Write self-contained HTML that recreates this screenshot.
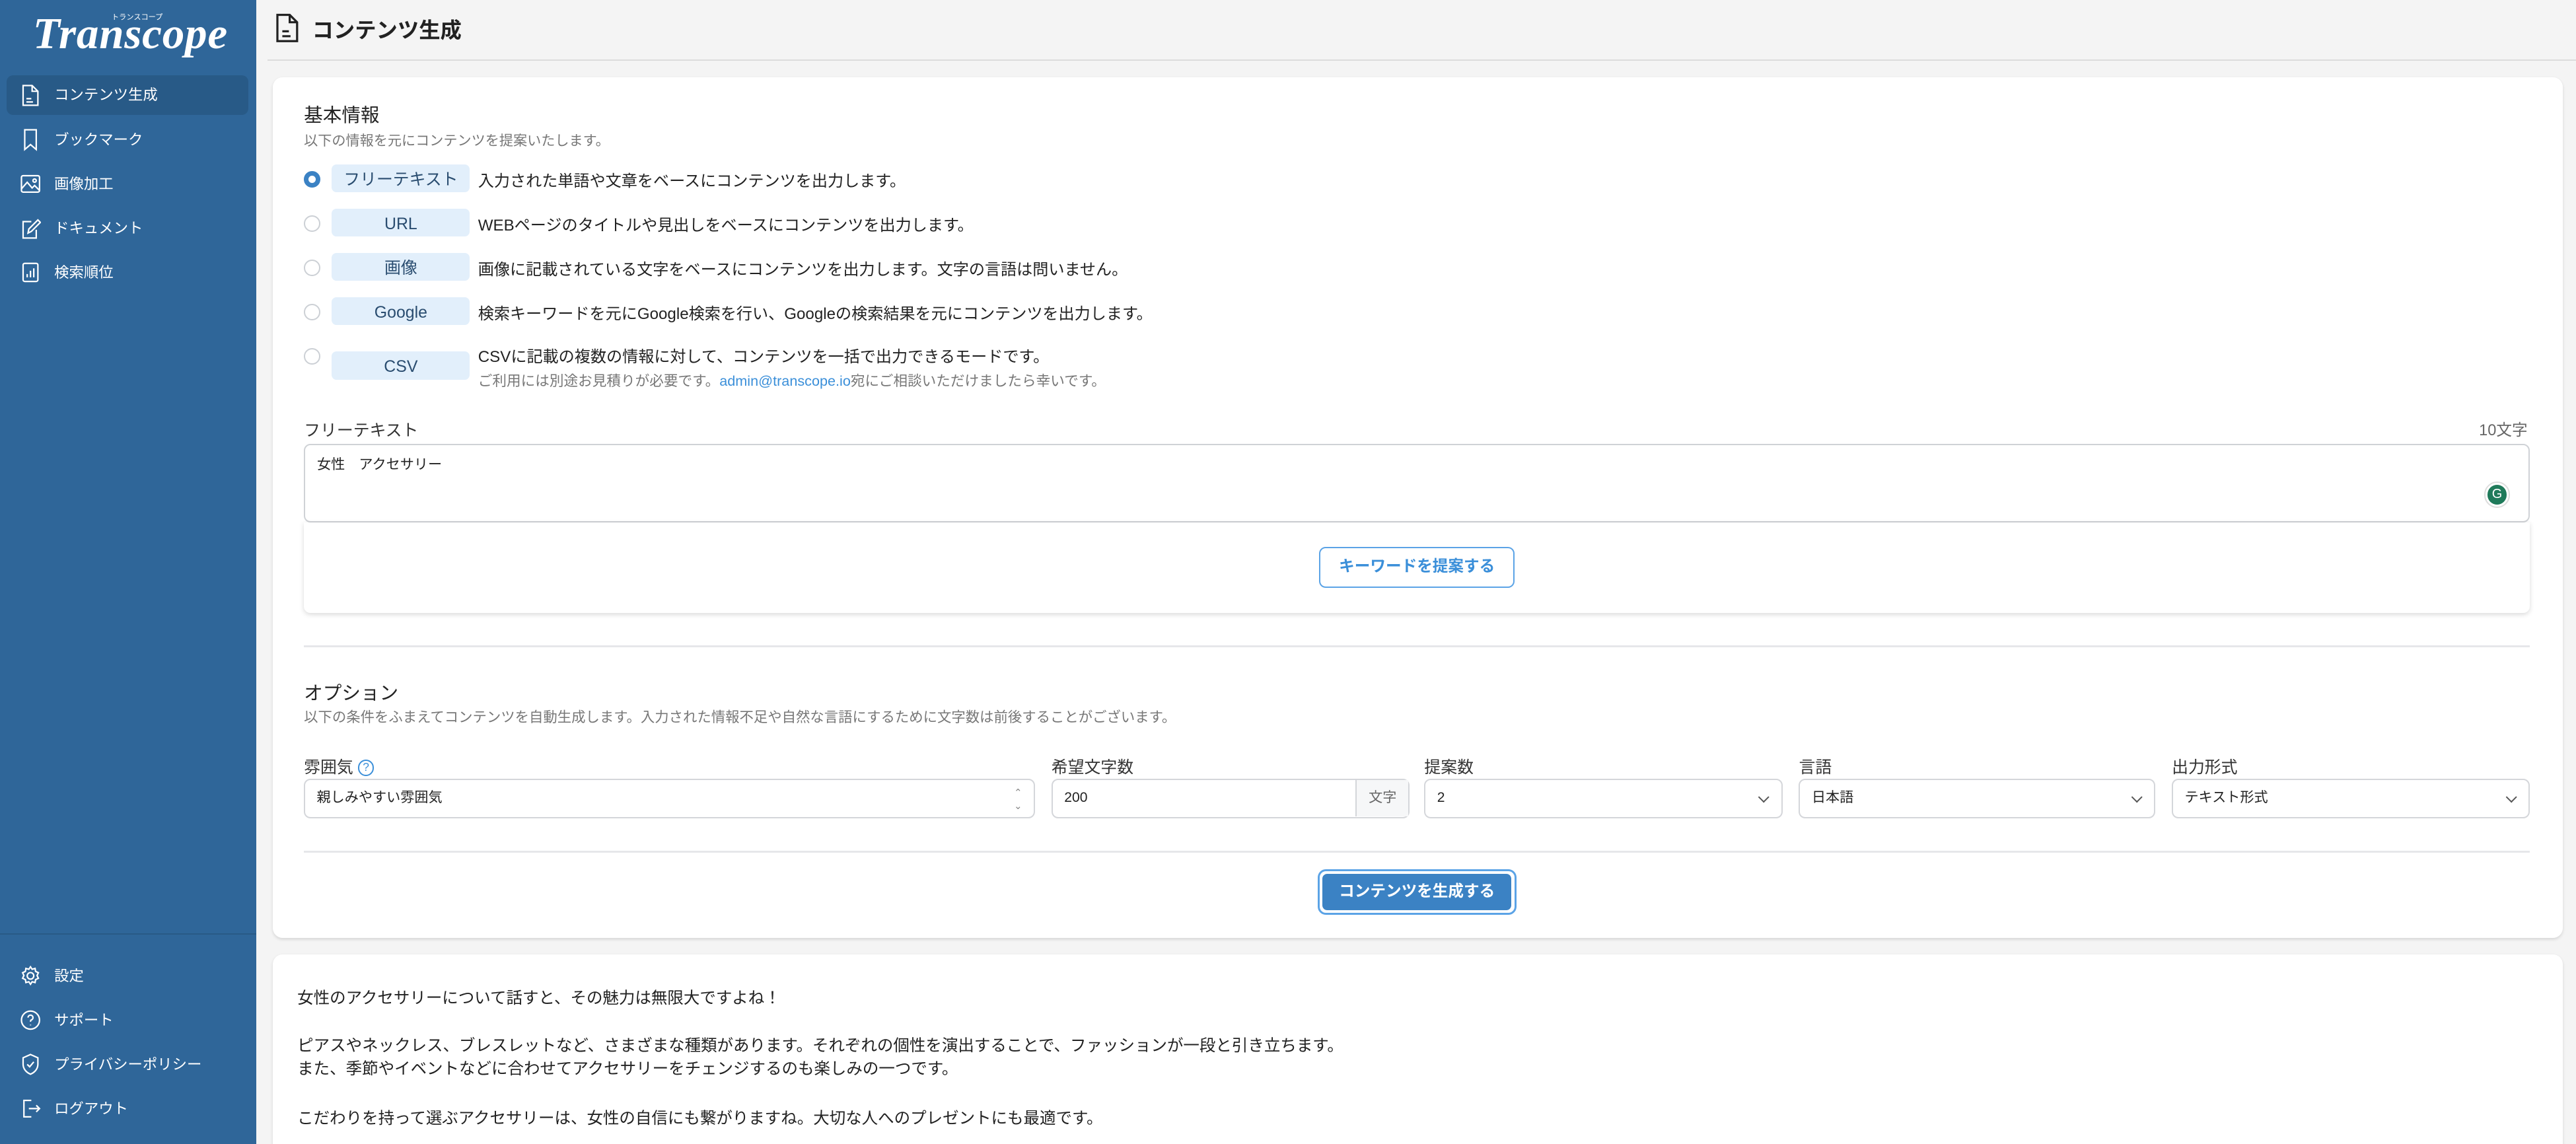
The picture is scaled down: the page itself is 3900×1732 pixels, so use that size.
<!DOCTYPE html>
<html><head><meta charset="utf-8">
<style>
*{margin:0;padding:0;box-sizing:border-box}
html,body{width:3900px;height:1732px;overflow:hidden;background:#f4f4f4}
#w{zoom:2.4872;width:1568px;height:696.4px;position:relative;font-family:"Liberation Sans","Noto Sans CJK JP",sans-serif;color:#222;overflow:hidden}
.a{position:absolute;white-space:nowrap}
#side{position:absolute;left:0;top:0;width:156px;height:697px;background:#2f6699}
.nav{position:absolute;left:4px;width:147px;height:24px;color:#fff;font-size:9px;line-height:24px;padding-left:29px}
.nav svg{position:absolute;left:8px;top:5px}
.card{position:absolute;background:#fff;border-radius:6px;box-shadow:0 1px 2px rgba(0,0,0,.12)}
.radio{position:absolute;left:185px;width:10px;height:10px;border-radius:50%;border:1px solid #ccd0d5;background:#fff}
.pill{position:absolute;left:202px;width:84px;height:17px;background:#e2effb;border-radius:3px;color:#2a4d70;font-size:10px;text-align:center;line-height:19px}
.desc{position:absolute;left:291px;font-size:9.7px;color:#222}
.lbl{position:absolute;top:459px;font-size:10px;color:#333}
.sel{position:absolute;top:474px;height:24px;border:1px solid #d4d6da;border-radius:4px;background:#fff;font-size:8.5px;line-height:22px;padding-left:7px;color:#222}
.chev{position:absolute;right:8px;top:8px;width:5px;height:5px;border-right:1px solid #555;border-bottom:1px solid #555;transform:rotate(45deg)}
.hr{position:absolute;left:185px;width:1355px;height:1px;background:#e6e7ea}
</style></head><body><div id="w">
<div id="side">
  <div class="a" style="left:20px;top:5px;font-family:'Liberation Serif',serif;font-weight:bold;font-style:italic;font-size:27px;color:#fff;letter-spacing:0.3px">Transcope</div>
  <div class="a" style="left:68px;top:7px;font-size:5px;color:#fff;transform:scale(.9);transform-origin:left top">トランスコープ</div>
  <div class="nav" style="top:46px;background:#285a87;border-radius:4px">
    <svg width="13" height="14" viewBox="0 0 13 14" fill="none" stroke="#fff" stroke-width="0.9"><path d="M2 1h5.5l3.5 3.5V13H2z M7.5 1v3.5H11 M4 9h3 M4 11h4"/></svg>コンテンツ生成</div>
  <div class="nav" style="top:73px"><svg width="13" height="14" viewBox="0 0 13 14" fill="none" stroke="#fff" stroke-width="0.9"><path d="M3 1h7v12L6.5 10 3 13z"/></svg>ブックマーク</div>
  <div class="nav" style="top:100px"><svg width="13" height="14" viewBox="0 0 13 14" fill="none" stroke="#fff" stroke-width="0.9"><rect x="1" y="2" width="11" height="10" rx="1"/><path d="M1 10l3.5-4 3 3.5 1.5-1.5 3 3"/><circle cx="9" cy="5" r="1"/></svg>画像加工</div>
  <div class="nav" style="top:127px"><svg width="13" height="14" viewBox="0 0 13 14" fill="none" stroke="#fff" stroke-width="0.9"><path d="M7 3H2v10h8V8 M5 10l.5-2.5L11 2l1.5 1.5L7 9z"/></svg>ドキュメント</div>
  <div class="nav" style="top:154px"><svg width="13" height="14" viewBox="0 0 13 14" fill="none" stroke="#fff" stroke-width="0.9"><rect x="2" y="1.5" width="9" height="11" rx="1"/><path d="M4.5 10V8 M6.5 10V6 M8.5 10V4.5"/></svg>検索順位</div>
  <div style="position:absolute;left:0;top:568px;width:156px;height:1px;background:#295a86"></div>
  <div class="nav" style="top:582px"><svg width="13" height="14" viewBox="0 0 13 14" fill="none" stroke="#fff" stroke-width="0.9"><circle cx="6.5" cy="7" r="2"/><path d="M6.5 1.5l1 1.5 1.8-.5.3 1.8 1.7.8-.8 1.7.8 1.7-1.7.8-.3 1.8-1.8-.5-1 1.5-1-1.5-1.8.5-.3-1.8-1.7-.8.8-1.7-.8-1.7 1.7-.8.3-1.8 1.8.5z"/></svg>設定</div>
  <div class="nav" style="top:609px"><svg width="13" height="14" viewBox="0 0 13 14" fill="none" stroke="#fff" stroke-width="0.9"><circle cx="6.5" cy="7" r="5.5"/><path d="M5 5.5a1.5 1.5 0 1 1 2 1.4c-.5.2-.5.6-.5 1.1 M6.5 9.8v.4"/></svg>サポート</div>
  <div class="nav" style="top:636px"><svg width="13" height="14" viewBox="0 0 13 14" fill="none" stroke="#fff" stroke-width="0.9"><path d="M6.5 1L11 3v4c0 3-2.2 5-4.5 6C4.2 12 2 10 2 7V3z M4.5 7l1.5 1.5 2.5-3"/></svg>プライバシーポリシー</div>
  <div class="nav" style="top:663px"><svg width="13" height="14" viewBox="0 0 13 14" fill="none" stroke="#fff" stroke-width="0.9"><path d="M7 2H2.5v10H7 M5.5 7h6.5 M10 5l2 2-2 2"/></svg>ログアウト</div>
</div>

<svg class="a" style="left:167px;top:8px" width="16" height="18" viewBox="0 0 16 18" fill="none" stroke="#222" stroke-width="1.3"><path d="M2 1h7.5L14 5.5V17H2z M9.5 1v4.5H14 M5 11h4 M5 14h5"/></svg>
<div class="a" style="left:190px;top:8px;font-size:13px;font-weight:bold;color:#222">コンテンツ生成</div>
<div class="a" style="left:163px;top:36px;width:1405px;height:1px;background:#dcdcdc"></div>

<div class="card" style="left:166px;top:47px;width:1394px;height:524px"></div>
<div class="a" style="left:185px;top:61px;font-size:11.5px;color:#222">基本情報</div>
<div class="a" style="left:185px;top:79px;font-size:8.5px;color:#777">以下の情報を元にコンテンツを提案いたします。</div>

<div class="radio" style="top:104px;border:3px solid #3b82c4"></div>
<div class="pill" style="top:100px">フリーテキスト</div>
<div class="desc" style="top:102px">入力された単語や文章をベースにコンテンツを出力します。</div>
<div class="radio" style="top:131px"></div>
<div class="pill" style="top:127px">URL</div>
<div class="desc" style="top:129px">WEBページのタイトルや見出しをベースにコンテンツを出力します。</div>
<div class="radio" style="top:158px"></div>
<div class="pill" style="top:154px">画像</div>
<div class="desc" style="top:156px">画像に記載されている文字をベースにコンテンツを出力します。文字の言語は問いません。</div>
<div class="radio" style="top:185px"></div>
<div class="pill" style="top:181px">Google</div>
<div class="desc" style="top:183px">検索キーワードを元にGoogle検索を行い、Googleの検索結果を元にコンテンツを出力します。</div>
<div class="radio" style="top:212px"></div>
<div class="pill" style="top:214px">CSV</div>
<div class="desc" style="top:209px">CSVに記載の複数の情報に対して、コンテンツを一括で出力できるモードです。</div>
<div class="desc" style="top:225px;font-size:8.7px;color:#777">ご利用には別途お見積りが必要です。<span style="color:#3b8fd9">admin@transcope.io</span>宛にご相談いただけましたら幸いです。</div>

<div class="a" style="left:185px;top:254px;font-size:10px;color:#333">フリーテキスト</div>
<div class="a" style="left:1509px;top:254px;font-size:9.5px;color:#666">10文字</div>
<div class="a" style="left:185px;top:270px;width:1355px;height:48px;border:1px solid #cfd2d6;border-radius:4px;background:#fff"></div>
<div class="a" style="left:193px;top:276px;font-size:8.5px;color:#222">女性　アクセサリー</div>
<div class="a" style="left:1512px;top:293px;width:16px;height:16px;border-radius:50%;background:#fff;border:1px solid #ddd"></div>
<div class="a" style="left:1514px;top:295px;width:12px;height:12px;border-radius:50%;background:#1f7a5a;color:#fff;font-size:8px;line-height:12px;text-align:center">G</div>
<div class="a" style="left:185px;top:318px;width:1355px;height:55px;background:#fff;border-radius:0 0 4px 4px;box-shadow:0 1px 3px rgba(0,0,0,.15)"></div>
<div class="a" style="left:803px;top:333px;width:119px;height:25px;border:1px solid #5ba3e6;border-radius:4px;color:#3b8fd9;font-size:9.5px;font-weight:bold;text-align:center;line-height:23px;background:#fff">キーワードを提案する</div>

<div class="hr" style="top:393px"></div>
<div class="a" style="left:185px;top:413px;font-size:11.5px;color:#222">オプション</div>
<div class="a" style="left:185px;top:430px;font-size:8.6px;color:#777">以下の条件をふまえてコンテンツを自動生成します。入力された情報不足や自然な言語にするために文字数は前後することがございます。</div>

<div class="lbl" style="left:185px">雰囲気 <span style="display:inline-block;width:10px;height:10px;border:1px solid #3b8fd9;border-radius:50%;color:#3b8fd9;font-size:7px;line-height:8px;text-align:center;vertical-align:1px">?</span></div>
<div class="lbl" style="left:640px">希望文字数</div>
<div class="lbl" style="left:867px">提案数</div>
<div class="lbl" style="left:1095px">言語</div>
<div class="lbl" style="left:1322px">出力形式</div>

<div class="sel" style="left:185px;width:445px">親しみやすい雰囲気<span class="a" style="right:7px;font-size:6px;color:#888;line-height:8px;top:4px">⌃<br>⌄</span></div>
<div class="sel" style="left:640px;width:218px">200<span class="a" style="right:0;top:0;width:32px;height:22px;border-left:1px solid #d4d6da;background:#f6f7f8;text-align:center;color:#666">文字</span></div>
<div class="sel" style="left:867px;width:218px">2<span class="chev"></span></div>
<div class="sel" style="left:1095px;width:217px">日本語<span class="chev"></span></div>
<div class="sel" style="left:1322px;width:218px">テキスト形式<span class="chev"></span></div>

<div class="hr" style="top:518px"></div>
<div class="a" style="left:802px;top:529px;width:121px;height:28px;border:1.5px solid #5ba3e6;border-radius:5px"></div>
<div class="a" style="left:805px;top:532px;width:115px;height:22px;background:#3b82c4;border-radius:3px;color:#fff;font-size:9.5px;font-weight:bold;text-align:center;line-height:22px">コンテンツを生成する</div>

<div class="card" style="left:166px;top:581px;width:1394px;height:130px"></div>
<div class="a" style="left:181px;top:600px;font-size:9.85px;color:#222">女性のアクセサリーについて話すと、その魅力は無限大ですよね！</div>
<div class="a" style="left:181px;top:629px;font-size:9.85px;color:#222">ピアスやネックレス、ブレスレットなど、さまざまな種類があります。それぞれの個性を演出することで、ファッションが一段と引き立ちます。</div>
<div class="a" style="left:181px;top:643px;font-size:9.85px;color:#222">また、季節やイベントなどに合わせてアクセサリーをチェンジするのも楽しみの一つです。</div>
<div class="a" style="left:181px;top:673px;font-size:9.85px;color:#222">こだわりを持って選ぶアクセサリーは、女性の自信にも繋がりますね。大切な人へのプレゼントにも最適です。</div>
</div></body></html>
